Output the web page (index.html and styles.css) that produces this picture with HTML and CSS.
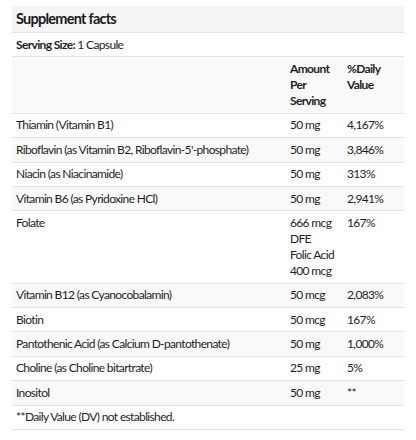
FILE: index.html
```html
<!DOCTYPE html>
<html>
<head>
<meta charset="utf-8">
<link rel="stylesheet" href="styles.css">
</head>
<body>
<div class="facts">
  <table class="facts-table">
    <colgroup>
      <col class="col-name">
      <col class="col-amount">
      <col class="col-dv">
    </colgroup>
    <thead>
      <tr class="title-row"><th colspan="3">Supplement facts</th></tr>
      <tr class="serving-row"><td colspan="3"><b>Serving Size:</b> 1 Capsule</td></tr>
      <tr class="head-row stripe">
        <th></th>
        <th>Amount Per Serving</th>
        <th>%Daily Value</th>
      </tr>
    </thead>
    <tbody>
      <tr><td>Thiamin (Vitamin B1)</td><td>50 mg</td><td>4,167%</td></tr>
      <tr class="stripe"><td>Riboflavin (as Vitamin B2, Riboflavin-5'-phosphate)</td><td>50 mg</td><td>3,846%</td></tr>
      <tr><td>Niacin (as Niacinamide)</td><td>50 mg</td><td>313%</td></tr>
      <tr class="stripe"><td>Vitamin B6 (as Pyridoxine HCl)</td><td>50 mg</td><td>2,941%</td></tr>
      <tr><td>Folate</td><td><span class="line">666 mcg DFE</span><span class="line">Folic Acid 400 mcg</span></td><td>167%</td></tr>
      <tr class="stripe"><td>Vitamin B12 (as Cyanocobalamin)</td><td>50 mcg</td><td>2,083%</td></tr>
      <tr><td>Biotin</td><td>50 mcg</td><td>167%</td></tr>
      <tr class="stripe"><td>Pantothenic Acid (as Calcium D-pantothenate)</td><td>50 mg</td><td>1,000%</td></tr>
      <tr><td>Choline (as Choline bitartrate)</td><td>25 mg</td><td>5%</td></tr>
      <tr class="stripe"><td>Inositol</td><td>50 mg</td><td>**</td></tr>
      <tr class="foot-row"><td colspan="3">**Daily Value (DV) not established.</td></tr>
    </tbody>
  </table>
</div>
</body>
</html>
```

FILE: styles.css
```css
* { box-sizing: border-box; }
html, body { margin: 0; background: #fff; }
body {
  font-family: Lato, "Open Sans", Arial, sans-serif;
  font-size: 12px;
  letter-spacing: -0.65px;
  line-height: 16px;
  color: #1e1e1e;
}
.facts {
  padding: 6px 12px 0 12px;
}
.facts-table {
  width: 392px;
  border-collapse: collapse;
  table-layout: fixed;
}
.col-name { width: 274px; }
.col-amount { width: 57px; }
.col-dv { width: 61px; }
.facts-table th,
.facts-table td {
  text-align: left;
  vertical-align: top;
  padding: 3.7px 4px;
  border-bottom: 1px solid #e2e2e2;
}
.facts-table th { font-weight: 700; }
.title-row th {
  background: #f5f5f5;
  font-size: 14.5px;
  letter-spacing: -0.75px;
  line-height: 18px;
  padding: 4px 4px 4px;
  color: #1a1a1a;
}
.line { display: block; }
.serving-row td b { font-weight: 700; }
.stripe td, .stripe th { background: #f9f9f9; }
.foot-row td { border-bottom: 1px solid #e2e2e2; }
```
